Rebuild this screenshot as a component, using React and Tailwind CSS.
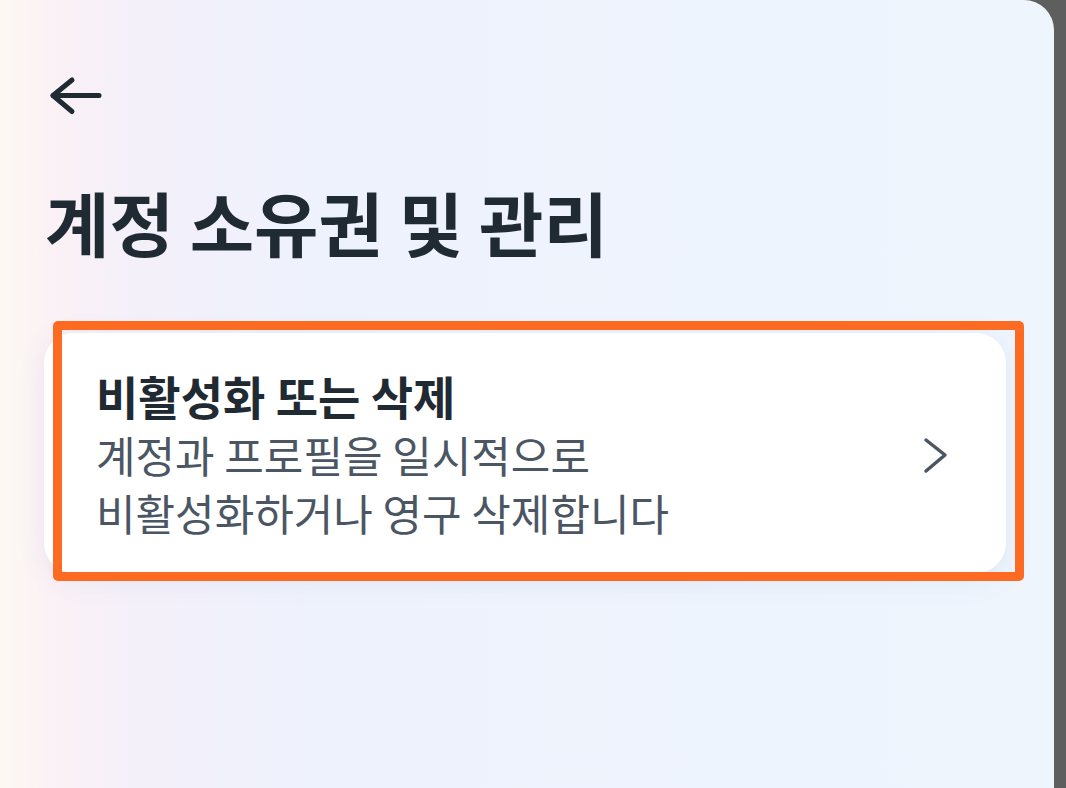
const FONT = { fontFamily: '"Noto Sans CJK KR", "Noto Sans", sans-serif' };

function BackArrow() {
  return (
    <svg width="56" height="44" viewBox="0 0 56 44" fill="none" stroke="#1f2a33" strokeWidth="5" strokeLinecap="round" strokeLinejoin="round">
      <path d="M24 6 5 21.5 24 37.5" />
      <path d="M5 21.5h46" />
    </svg>
  );
}

function SettingRow({ title, lines }) {
  return (
    <div className="ml-[44px] mr-[48px] flex items-center rounded-[30px] bg-white pt-[32px] pb-[32px] pl-[52px] pr-[58px] shadow-[0_6px_28px_rgba(90,120,170,0.10)]">
      <div className="flex-1">
        <p className="text-[46px] leading-[60px] font-bold text-[#1f2a33]">{title}</p>
        {lines.map((line) => (
          <p key={line} className="text-[43px] leading-[58px] text-[#4b5664]">{line}</p>
        ))}
      </div>
      <svg width="26" height="40" viewBox="0 0 26 40" fill="none" stroke="#4b5664" strokeWidth="3.5" strokeLinecap="round" strokeLinejoin="round" className="mt-[4px]">
        <path d="M4 5 23 20 4 36" />
      </svg>
    </div>
  );
}

export default function App() {
  return (
    <div className="flex h-[788px] w-[1066px] overflow-hidden bg-[#5e5e5e]" style={FONT}>
      <div className="relative h-full w-[1054px] rounded-tr-[30px] bg-[linear-gradient(90deg,#fdf9f2_0%,#fbf1f6_5%,#f4f0fa_13%,#eef2fc_30%,#eef5fd_100%)]">
        <div className="pl-[48px] pt-[74px]">
          <BackArrow />
        </div>

        <h1 className="mt-[65px] pl-[45px] text-[70px] leading-[78px] font-bold text-[#1f2a33]">
          계정 소유권 및 관리
        </h1>

        <div className="mt-[72px]">
          <SettingRow
            title="비활성화 또는 삭제"
            lines={["계정과 프로필을 일시적으로", "비활성화하거나 영구 삭제합니다"]}
          />
        </div>

        {/* highlight box drawn over the row */}
        <div className="pointer-events-none absolute left-[53px] top-[321px] h-[260px] w-[971px] rounded-[5px] border-[9px] border-[#fd6a22]" />
      </div>
    </div>
  );
}
